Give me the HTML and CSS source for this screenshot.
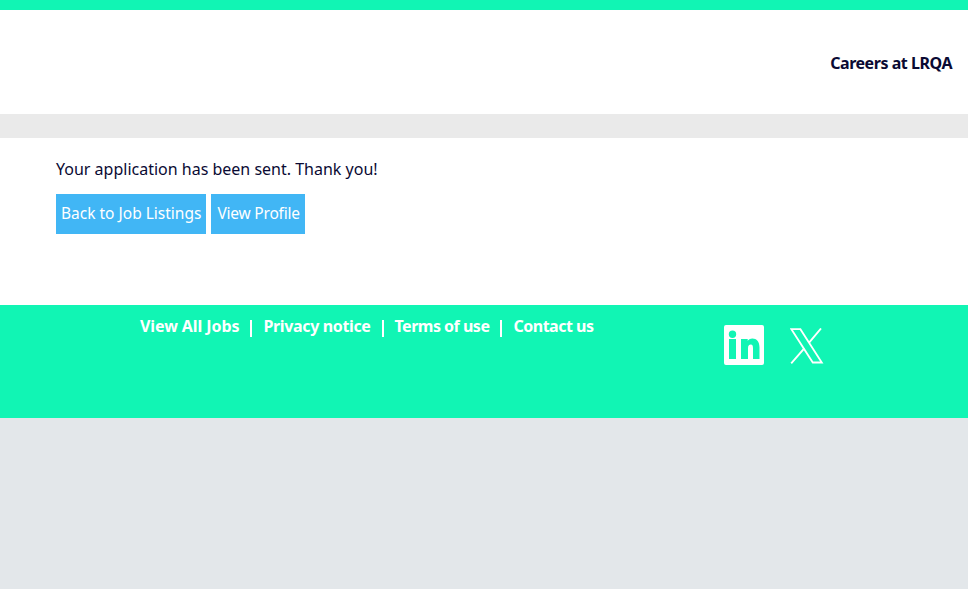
FILE: index.html
```html
<!DOCTYPE html>
<html lang="en">
<head>
<meta charset="utf-8">
<title>Careers at LRQA</title>
<link rel="stylesheet" href="styles.css">
</head>
<body>
<div class="topbar"></div>
<header class="header"><a class="brand" href="#">Careers at LRQA</a></header>
<div class="band"></div>
<main class="main">
  <p class="message">Your application has been sent. Thank you!</p>
  <div class="actions">
    <a class="btn" href="#">Back to Job Listings</a>
    <a class="btn btn-profile" href="#">View Profile</a>
  </div>
</main>
<footer class="footer">
  <nav class="links">
    <a class="link-loose" href="#">View All Jobs</a><span class="sep"></span>
    <a href="#">Privacy notice</a><span class="sep"></span>
    <a class="link-tight" href="#">Terms of use</a><span class="sep"></span>
    <a class="link-tight" href="#">Contact us</a>
  </nav>
  <div class="social">
    <svg class="icon-in" width="40" height="40" viewBox="0 0 40 40" aria-label="LinkedIn">
      <path fill-rule="evenodd" fill="#fff" d="M2 0H38A2 2 0 0 1 40 2V38A2 2 0 0 1 38 40H2A2 2 0 0 1 0 38V2A2 2 0 0 1 2 0ZM5 14V34H12V14ZM8.500 5.500A3.700 3.700 0 1 0 8.500 12.900A3.700 3.700 0 1 0 8.500 5.500ZM17 14V34H24V23.500C24 20.500 25 19.500 26.800 19.500C28.600 19.500 29 21 29 23.500V34H35.500V22.500C35.500 16.500 32.500 13.500 28.500 13.500C26 13.500 24.500 14.700 23.700 16V14Z"/>
    </svg>
    <svg class="icon-x" width="34" height="36" viewBox="0 0 34 36" aria-label="X">
      <path fill="none" stroke="#fff" stroke-width="1.800" d="M1.400 1.200H10.400L31.800 34.500H22.800Z"/>
      <path fill="none" stroke="#fff" stroke-width="1.900" d="M31 0.500L18.900 14.800M14.300 20.300L1.200 35.300"/>
    </svg>
  </div>
</footer>
<div class="rest"></div>
</body>
</html>
```
FILE: styles.css
```css
* { box-sizing: border-box; }
html, body { margin: 0; height: 100%; }
body {
  display: flex;
  flex-direction: column;
  background: #e3e7ea;
  font-family: "Noto Sans", "Open Sans", sans-serif;
  color: #0a0a33;
}
a { text-decoration: none; color: inherit; }
.topbar { height: 10px; background: #11f5b4; }
.header {
  height: 104px;
  background: #fff;
  display: flex;
  justify-content: flex-end;
  align-items: flex-start;
  padding: 43px 16px 0 0;
}
.brand { font-size: 16px; line-height: 20px; font-weight: 700; letter-spacing: -0.46px; }
.band { height: 24px; background: #eaeaea; }
.main { height: 167px; background: #fff; padding: 20px 56px 0; }
.message { margin: 0; font-size: 16px; line-height: 22px; }
.actions { display: flex; gap: 5px; margin-top: 14px; }
.btn {
  height: 40px;
  padding: 0 5px;
  background: #41b6f5;
  color: #fff;
  font-size: 15.5px;
  line-height: 38px;
}
.btn-profile { padding-left: 6px; letter-spacing: -0.2px; }
.footer { height: 113px; background: #11f5b4; display: flex; }
.links {
  display: flex;
  align-items: flex-start;
  width: 584px;
  margin-left: 140px;
  padding-top: 11px;
  color: #fff;
  font-size: 16px;
  line-height: 20px;
  font-weight: 700;
  letter-spacing: -0.36px;
}
.link-loose { letter-spacing: -0.08px; }
.link-tight { letter-spacing: -0.5px; }
.sep { width: 2px; height: 17px; margin: 4px 11px 0; background: #fff; }
.social { display: flex; align-items: flex-start; gap: 26px; padding-top: 20px; }
.icon-x { margin-top: 3px; }
.rest { flex: 1; }
```
